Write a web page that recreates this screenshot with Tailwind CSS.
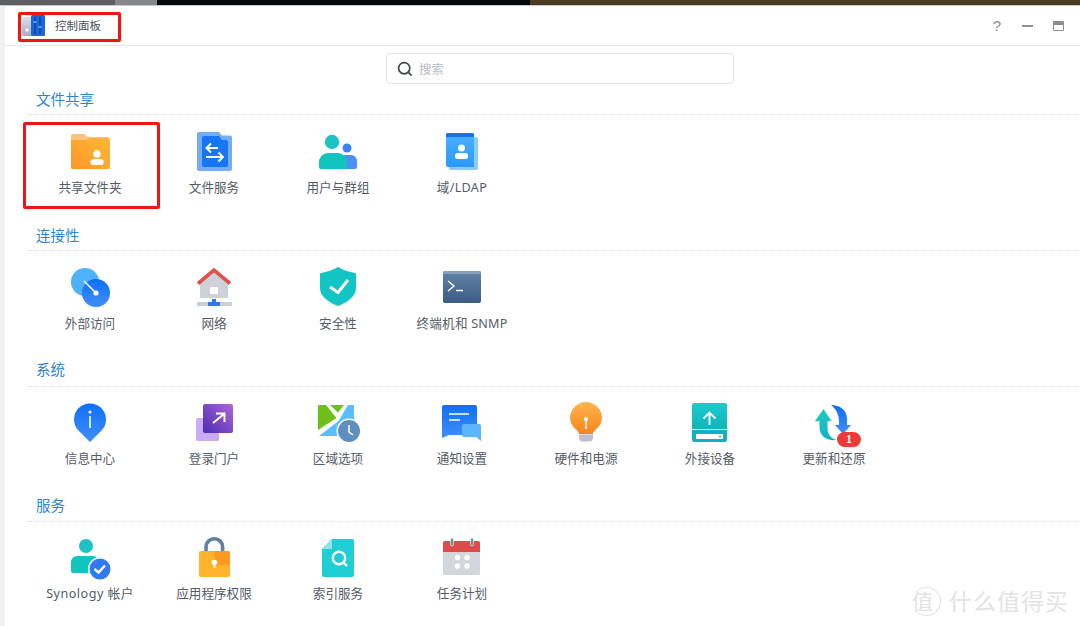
<!DOCTYPE html>
<html lang="zh-CN">
<head>
<meta charset="UTF-8" />
<title>控制面板</title>
<script src="https://cdn.jsdelivr.net/npm/@tailwindcss/browser@4"></script>
</head>
<body class="w-[1080px] h-[626px] overflow-hidden bg-white font-['Noto_Sans','Noto_Sans_CJK_SC',sans-serif] text-[#555c66]">
<svg width="0" height="0" class="absolute">
  <defs>
    <linearGradient id="orange" x1="0" y1="1" x2="1" y2="0"><stop offset="0" stop-color="#ff9526"/><stop offset="1" stop-color="#ffb93a"/></linearGradient>
    <linearGradient id="blue" x1="0" y1="0" x2="0" y2="1"><stop offset="0" stop-color="#0f6ff5"/><stop offset="1" stop-color="#3f8ffb"/></linearGradient>
    <linearGradient id="sky" x1="0" y1="0" x2="0" y2="1"><stop offset="0" stop-color="#4ab2ff"/><stop offset="1" stop-color="#2c98ff"/></linearGradient>
    <linearGradient id="term" x1="0" y1="0" x2="0" y2="1"><stop offset="0" stop-color="#6384a8"/><stop offset="1" stop-color="#3c5b85"/></linearGradient>
    <linearGradient id="purple" x1="0" y1="1" x2="1" y2="0"><stop offset="0" stop-color="#4a2cae"/><stop offset="1" stop-color="#ad66da"/></linearGradient>
    <linearGradient id="bulb" x1="0" y1="0" x2="0" y2="1"><stop offset="0" stop-color="#ffb64f"/><stop offset="1" stop-color="#f5851c"/></linearGradient>
    <linearGradient id="teal" x1="0" y1="0" x2="0" y2="1"><stop offset="0" stop-color="#1ecbcb"/><stop offset="1" stop-color="#10b4bd"/></linearGradient>
    <linearGradient id="slate" x1="0" y1="0" x2="0" y2="1"><stop offset="0" stop-color="#dcdeec"/><stop offset="1" stop-color="#a9adc4"/></linearGradient>
  </defs>
</svg>

<!-- wallpaper behind the window -->
<div class="flex h-[5px]">
  <div class="w-[115px] bg-[#5d5f62]"></div>
  <div class="w-[42px] bg-[#85878a]"></div>
  <div class="w-[373px] bg-[#07080c]"></div>
  <div class="flex-1 bg-[#4a3a22]"></div>
</div>
<div class="h-px bg-[#c9c9c9]"></div>

<div class="flex h-[620px]">
  <div class="w-[5px] bg-[#eef0f2]"></div>
  <div class="flex-1 relative">
    <!-- title bar -->
    <div class="flex items-center h-[40px] border-b border-[#e6e8ea]">
      <svg class="ml-[17px]" width="24" height="22" viewBox="0 0 24 22">
        <rect x="0" y="2" width="11" height="19" rx="2" fill="url(#slate)"/>
        <rect x="9" y="0" width="14" height="21" rx="1" fill="#1668dc"/>
        <path d="M13 2v17M18 2v17" stroke="#0c3f96" stroke-width="1.300" fill="none"/>
        <path d="M11.500 7h3M16.500 12h3" stroke="#7fb6ff" stroke-width="1.500"/>
        <circle cx="5" cy="15" r="1.600" fill="#fff"/>
      </svg>
      <span class="ml-[9px] text-[11.5px] text-[#4d535c]">控制面板</span>
      <div class="ml-auto flex items-center text-[#8a8f96]">
        <span class="text-[15px] leading-none font-['Liberation_Sans',sans-serif]">?</span>
        <div class="ml-[21px] w-[11px] h-[2px] bg-[#8a8f96]"></div>
        <div class="ml-[20px] mr-[16px] w-[11px] h-[10px] border border-[#8a8f96] border-t-[4px] rounded-[1px]"></div>
      </div>
    </div>

    <!-- search -->
    <div class="flex pt-[7px] pl-[381px]">
      <div class="flex items-center w-[348px] h-[31px] pl-[10px] border border-[#e0e3e7] rounded-[4px]">
        <svg width="16" height="16" viewBox="0 0 16 16" fill="none" stroke="#3f4650" stroke-width="1.700">
          <circle cx="7.200" cy="7.200" r="5.600"/><path d="M11.200 11.200l3.400 3.400"/>
        </svg>
        <span class="ml-[6px] mt-[3px] text-[12.5px] text-[#b9bcc1]">搜索</span>
      </div>
    </div>

    <!-- 文件共享 -->
    <section class="ml-[23px] h-[135px] mt-[6px]">
      <h2 class="pl-2 h-[20px] leading-[18px] text-[14.5px] text-[#2f86cf]">文件共享</h2>
      <div class="mt-[4px] border-t border-dotted border-[#d8dbde]"></div>
      <div class="flex mt-[13px]">
        <div class="w-[124px] flex flex-col items-center">
          <svg width="48" height="48" viewBox="0 0 48 48">
            <path d="M5 8a2 2 0 0 1 2-2h11l4 3h20a2 2 0 0 1 2 2v6H5z" fill="#fcc27e"/>
            <path d="M5 12h16l2-2h19a2 2 0 0 1 2 2v27a2 2 0 0 1-2 2H7a2 2 0 0 1-2-2z" fill="url(#orange)"/>
            <circle cx="31" cy="26" r="3.700" fill="#fff"/><rect x="24.500" y="31" width="13" height="6" rx="2.500" fill="#fff"/>
          </svg>
          <span class="mt-[5px] text-[12.6px] leading-[14px]">共享文件夹</span>
        </div>
        <div class="w-[124px] flex flex-col items-center">
          <svg width="48" height="48" viewBox="0 0 48 48">
            <path d="M7 6a2 2 0 0 1 2-2h20l3 3.500h8a2 2 0 0 1 2 2V41a2 2 0 0 1-2 2H9a2 2 0 0 1-2-2z" fill="#76abf6"/>
            <path d="M12 10a2 2 0 0 1 2-2h15l3 4h4a2 2 0 0 1 2 2v23a2 2 0 0 1-2 2H14a2 2 0 0 1-2-2z" fill="#1677f5"/>
            <path d="M28 20H17M21 15.500L16.500 20l4.500 4.500M16 29h17M28.500 24.500L33 29l-4.500 4.500" stroke="#fff" stroke-width="1.900" fill="none"/>
          </svg>
          <span class="mt-[5px] text-[12.6px] leading-[14px]">文件服务</span>
        </div>
        <div class="w-[124px] flex flex-col items-center">
          <svg width="48" height="48" viewBox="0 0 48 48">
            <circle cx="33" cy="20" r="4.500" fill="#3b82f6"/>
            <path d="M26 41V33a6 6 0 0 1 6-6h5a6 6 0 0 1 6 6v6a2 2 0 0 1-2 2z" fill="#4b8ff7"/>
            <circle cx="18" cy="14" r="7.200" fill="#1fc2c4"/>
            <path d="M5 39v-5a9 9 0 0 1 9-9h10a9 9 0 0 1 9 9v7H7a2 2 0 0 1-2-2z" fill="#12c4be"/>
          </svg>
          <span class="mt-[5px] text-[12.6px] leading-[14px]">用户与群组</span>
        </div>
        <div class="w-[124px] flex flex-col items-center">
          <svg width="48" height="48" viewBox="0 0 48 48">
            <rect x="11" y="9" width="29" height="33" rx="2" fill="#8accff"/>
            <path d="M8 7a2 2 0 0 1 2-2h24a2 2 0 0 1 2 2v32H10a2 2 0 0 1-2-2z" fill="url(#sky)"/>
            <path d="M8 9V7a2 2 0 0 1 2-2h24a2 2 0 0 1 2 2v2z" fill="#1f6fe8"/>
            <circle cx="23.500" cy="20" r="3.500" fill="#fff"/><rect x="17" y="25" width="13" height="6" rx="2.500" fill="#fff"/>
          </svg>
          <span class="mt-[5px] text-[12.6px] leading-[14px] tracking-[0.3px]">域/LDAP</span>
        </div>
      </div>
    </section>

    <!-- 连接性 -->
    <section class="ml-[23px] h-[135px]">
      <h2 class="pl-2 h-[20px] leading-[20px] text-[14.5px] text-[#2f86cf]">连接性</h2>
      <div class="mt-[5px] border-t border-dotted border-[#d8dbde]"></div>
      <div class="flex mt-[12px]">
        <div class="w-[124px] flex flex-col items-center">
          <svg width="48" height="48" viewBox="0 0 48 48">
            <circle cx="19" cy="19" r="14" fill="#4db2fb"/>
            <circle cx="30" cy="30" r="14" fill="url(#blue)"/>
            <path d="M18 18L30 30" stroke="#fff" stroke-width="1.500"/><circle cx="30" cy="30" r="2.600" fill="#fff"/>
          </svg>
          <span class="mt-[6px] text-[12.6px] leading-[14px]">外部访问</span>
        </div>
        <div class="w-[124px] flex flex-col items-center">
          <svg width="48" height="48" viewBox="0 0 48 48">
            <path d="M10 20L24 8l14 12v15H10z" fill="#ced2d8"/>
            <path d="M8 20.500L24 7l16 13.500" stroke="#d9534f" stroke-width="3.600" fill="none"/>
            <rect x="20" y="24" width="8" height="7" rx="1" fill="#fff"/>
            <rect x="7" y="39" width="35" height="4" fill="#c9d0da"/>
            <path d="M22 36h4v3h4v4H18v-4h4z" fill="#2a7bf0"/>
          </svg>
          <span class="mt-[6px] text-[12.6px] leading-[14px]">网络</span>
        </div>
        <div class="w-[124px] flex flex-col items-center">
          <svg width="48" height="48" viewBox="0 0 48 48">
            <path d="M24 4c5 3 11 5 17 6a1 1 0 0 1 1 1V25c0 8-8 14-18 18C14 39 6 33 6 25V11a1 1 0 0 1 1-1c6-1 12-3 17-6z" fill="#12c5c5"/>
            <path d="M16 24l8 5.500L34 17" stroke="#fff" stroke-width="3" fill="none"/>
          </svg>
          <span class="mt-[6px] text-[12.6px] leading-[14px]">安全性</span>
        </div>
        <div class="w-[124px] flex flex-col items-center">
          <svg width="48" height="48" viewBox="0 0 48 48">
            <rect x="5" y="8" width="38" height="32" rx="2" fill="url(#term)"/>
            <path d="M5 11V10a2 2 0 0 1 2-2h34a2 2 0 0 1 2 2v1z" fill="#86a0bd"/>
            <path d="M10 18l6 5-6 5M18 27.500h7" stroke="#fff" stroke-width="1.500" fill="none"/>
          </svg>
          <span class="mt-[6px] text-[12.6px] leading-[14px] tracking-[0.2px]">终端机和 SNMP</span>
        </div>
      </div>
    </section>

    <!-- 系统 -->
    <section class="ml-[23px] h-[136px]">
      <h2 class="pl-2 h-[20px] leading-[18px] text-[14.5px] text-[#2f86cf]">系统</h2>
      <div class="mt-[6px] border-t border-dotted border-[#d8dbde]"></div>
      <div class="flex mt-[11px]">
        <div class="w-[124px] flex flex-col items-center">
          <svg width="48" height="48" viewBox="0 0 48 48">
            <path d="M24 44L12.500 32.500A16 16 0 1 1 35.500 32.500z" fill="url(#blue)"/>
            <circle cx="24" cy="14" r="1.500" fill="#fff"/><rect x="23.200" y="18" width="1.600" height="12" fill="#fff"/>
          </svg>
          <span class="mt-[6px] text-[12.6px] leading-[14px]">信息中心</span>
        </div>
        <div class="w-[124px] flex flex-col items-center">
          <svg width="48" height="48" viewBox="0 0 48 48">
            <rect x="6" y="20" width="23" height="23" rx="2" fill="#cbaaf6"/>
            <rect x="13" y="6" width="30" height="29" rx="2" fill="url(#purple)"/>
            <path d="M23 25l11-9M26 15.500h8.500V24" stroke="#fff" stroke-width="2" fill="none"/>
          </svg>
          <span class="mt-[6px] text-[12.6px] leading-[14px]">登录门户</span>
        </div>
        <div class="w-[124px] flex flex-col items-center">
          <svg width="48" height="48" viewBox="0 0 48 48">
            <path d="M4 8a1 1 0 0 1 1-1h7l10.500 13L4 32z" fill="#6cc017"/>
            <path d="M16 7h14l-6 7.500z" fill="#6cc017"/>
            <path d="M34 7h5a1 1 0 0 1 1 1v29a1 1 0 0 1-1 1H5l19.500-15z" fill="#5bbcff"/>
            <circle cx="35" cy="33" r="12.500" fill="#fff"/>
            <circle cx="35" cy="33" r="11" fill="#5f8fbe"/>
            <path d="M35 27v7l4 3" stroke="#fff" stroke-width="1.500" fill="none"/>
          </svg>
          <span class="mt-[6px] text-[12.6px] leading-[14px]">区域选项</span>
        </div>
        <div class="w-[124px] flex flex-col items-center">
          <svg width="48" height="48" viewBox="0 0 48 48">
            <path d="M4 9a2 2 0 0 1 2-2h31a2 2 0 0 1 2 2v28H11l-7 3z" fill="url(#blue)"/>
            <path d="M11 16h20M11 22h11" stroke="#fff" stroke-width="1.600"/>
            <path d="M24 28a2 2 0 0 1 2-2h15a2 2 0 0 1 2 2v15l-5-4H26a2 2 0 0 1-2-2z" fill="#5db5fc"/>
          </svg>
          <span class="mt-[6px] text-[12.6px] leading-[14px]">通知设置</span>
        </div>
        <div class="w-[124px] flex flex-col items-center">
          <svg width="48" height="48" viewBox="0 0 48 48">
            <path d="M17 36c0-4-9-7-9-16a16 16 0 0 1 32 0c0 9-9 12-9 16z" fill="url(#bulb)"/>
            <path d="M17 36.500h14v4l-2 3H19l-2-3z" fill="#bcc1c7"/>
            <circle cx="24" cy="21" r="2" fill="#fff"/><rect x="23.300" y="21" width="1.400" height="10" fill="#fff"/>
          </svg>
          <span class="mt-[6px] text-[12.6px] leading-[14px]">硬件和电源</span>
        </div>
        <div class="w-[124px] flex flex-col items-center">
          <svg width="48" height="48" viewBox="0 0 48 48">
            <path d="M6 7a2 2 0 0 1 2-2h31a2 2 0 0 1 2 2v24H6z" fill="url(#teal)"/>
            <path d="M6 32h35v10a2 2 0 0 1-2 2H8a2 2 0 0 1-2-2z" fill="#12b2bb"/>
            <rect x="10" y="36" width="27" height="5" fill="#fff"/><circle cx="34" cy="38.500" r="1" fill="#12b2bb"/>
            <path d="M23.500 27V15M17.500 20.500l6-6 6 6" stroke="#fff" stroke-width="1.800" fill="none"/>
          </svg>
          <span class="mt-[6px] text-[12.6px] leading-[14px]">外接设备</span>
        </div>
        <div class="relative w-[124px] flex flex-col items-center">
          <svg width="48" height="48" viewBox="0 0 48 48">
            <path d="M21 7c9 0 16 5 16 14v6h4L33 36l-8-9h4v-3c0-8-3-13-8-17z" fill="url(#blue)"/>
            <path d="M13.500 11l8 12h-4v7c0 6 3 10 9 12-9 1-17-3-17-13v-6H5z" fill="url(#teal)"/>
          </svg>
          <div class="absolute left-[65px] top-[34px] w-[24px] h-[15px] rounded-full bg-[#f03a3a] text-white text-[12px] leading-[15px] text-center font-['Liberation_Serif',serif] font-bold">1</div>
          <span class="mt-[6px] text-[12.6px] leading-[14px]">更新和还原</span>
        </div>
      </div>
    </section>

    <!-- 服务 -->
    <section class="ml-[23px]">
      <h2 class="pl-2 h-[20px] leading-[18px] text-[14.5px] text-[#2f86cf]">服务</h2>
      <div class="mt-[5px] border-t border-dotted border-[#d8dbde]"></div>
      <div class="flex mt-[11px]">
        <div class="w-[124px] flex flex-col items-center">
          <svg width="48" height="48" viewBox="0 0 48 48">
            <circle cx="20" cy="13" r="7" fill="#1fc2c4"/>
            <path d="M5 38V29a6 6 0 0 1 6-6h16a6 6 0 0 1 6 6v11H7a2 2 0 0 1-2-2z" fill="#12c4be"/>
            <circle cx="34" cy="36" r="12" fill="#fff"/><circle cx="34" cy="36" r="10.500" fill="#3478f0"/>
            <path d="M28.500 36l4 3.500 6.500-7" stroke="#fff" stroke-width="2.400" fill="none"/>
          </svg>
          <span class="mt-[6px] text-[12.6px] leading-[14px] tracking-[0.5px]">Synology 帐户</span>
        </div>
        <div class="w-[124px] flex flex-col items-center">
          <svg width="48" height="48" viewBox="0 0 48 48">
            <path d="M16 19v-5a8.300 8.300 0 0 1 16.600 0v5" stroke="#5f7fa3" stroke-width="3.600" fill="none"/>
            <rect x="9" y="18" width="31" height="26" rx="2" fill="#ffb32b"/>
            <path d="M24.500 18H38a2 2 0 0 1 2 2v12H24.500z" fill="#ff981e"/>
            <circle cx="24.500" cy="29.500" r="2.800" fill="#fff"/><rect x="23.700" y="30" width="1.600" height="5" fill="#fff"/>
          </svg>
          <span class="mt-[6px] text-[12.6px] leading-[14px]">应用程序权限</span>
        </div>
        <div class="w-[124px] flex flex-col items-center">
          <svg width="48" height="48" viewBox="0 0 48 48">
            <path d="M18 6h20a2 2 0 0 1 2 2v34a2 2 0 0 1-2 2H10a2 2 0 0 1-2-2V16z" fill="#1fcfd6"/>
            <path d="M8 16L18 6v10z" fill="#8ce6e8"/>
            <circle cx="25" cy="25" r="6.200" stroke="#fff" stroke-width="2.400" fill="none"/>
            <path d="M29.500 29.500L33 33" stroke="#fff" stroke-width="2.400"/>
          </svg>
          <span class="mt-[6px] text-[12.6px] leading-[14px]">索引服务</span>
        </div>
        <div class="w-[124px] flex flex-col items-center">
          <svg width="48" height="48" viewBox="0 0 48 48">
            <rect x="5" y="8" width="37" height="34" rx="2" fill="#d3d6da"/>
            <path d="M5 10a2 2 0 0 1 2-2h33a2 2 0 0 1 2 2v9H5z" fill="#df4a4a"/>
            <rect x="12.500" y="5" width="3" height="8" rx="1.500" fill="#7d8794" stroke="#fff" stroke-width="0.600"/>
            <rect x="32.500" y="5" width="3" height="8" rx="1.500" fill="#7d8794" stroke="#fff" stroke-width="0.600"/>
            <circle cx="19.500" cy="24.500" r="2.700" fill="#fff"/><circle cx="29" cy="24.500" r="2.700" fill="#fff"/>
            <circle cx="19.500" cy="33" r="2.700" fill="#fff"/><circle cx="29" cy="33" r="2.700" fill="#fff"/>
          </svg>
          <span class="mt-[6px] text-[12.6px] leading-[14px]">任务计划</span>
        </div>
      </div>
    </section>

    <!-- annotation boxes drawn over the screenshot -->
    <div class="absolute left-[13px] top-[6px] w-[103px] h-[30px] border-[3px] border-[#f01414] rounded-[2px]"></div>
    <div class="absolute left-[18px] top-[116px] w-[137px] h-[87px] border-[3px] border-[#f01414] rounded-[2px]"></div>

    <!-- site watermark -->
    <div class="absolute right-[11px] bottom-[10px] flex items-center text-[#e3e3e3]">
      <span class="w-[29px] h-[29px] rounded-full border border-[#e3e3e3] border-l-0 text-[21px] leading-[27px]">值</span>
      <span class="ml-[8px] text-[23px] leading-[30px] tracking-[1px]">什么值得买</span>
    </div>
  </div>
</div>
</body>
</html>
